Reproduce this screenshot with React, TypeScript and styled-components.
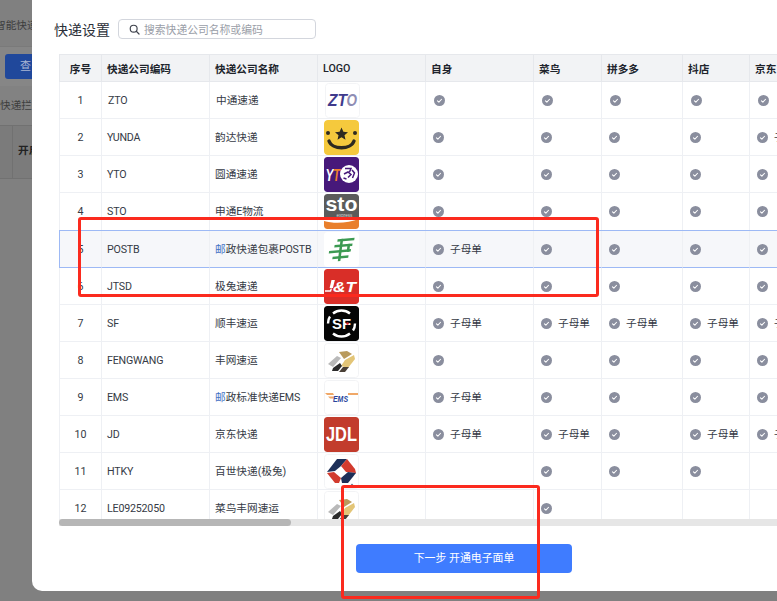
import React, { FC } from 'react';
import styled, { createGlobalStyle } from 'styled-components';

const GlobalStyle = createGlobalStyle`
	html, body {
		margin: 0;
		padding: 0;
		background: #808080;
	}
	body {
		font-family: Roboto, "Noto Sans CJK SC", sans-serif;
		font-size: 10.67px;
		color: #353a45;
	}
`;

const Page = styled.div`
	position: relative;
	display: flex;
	width: 777px;
	height: 601px;
	overflow: hidden;
	background: #808080;
`;

/* page behind the mask, only a 32px strip of it shows */
const Backdrop = styled.div`
	flex: 0 0 32px;
	display: flex;
	flex-direction: column;
	overflow: hidden;
	white-space: nowrap;
	color: #3d3d3d;
	font-size: 10.67px;
`;

const BackTitle = styled.div`
	height: 46px;
	line-height: 51px;
	margin-left: -5px;
	border-bottom: 1px solid #7a7a7a;
`;

const BackToolbar = styled.div`
	height: 39px;
	padding: 7px 0 0 5px;
	box-sizing: border-box;
	background: #868686;
`;

const BackButton = styled.div`
	width: 60px;
	height: 25px;
	line-height: 25px;
	padding-left: 15px;
	border-radius: 3px;
	background: #20489b;
	color: #a9b6d4;
	font-size: 11px;
`;

const BackTab = styled.div`
	height: 39px;
	line-height: 40px;
	background: #828282;
`;

const BackHead = styled.div`
	height: 52px;
	display: flex;
	background: #7b7b7b;
	border-top: 1px solid #717171;
	border-bottom: 1px solid #717171;
`;

const BackHeadCell = styled.div`
	flex: 0 0 12px;
	border-right: 1px solid #717171;
`;

const BackHeadText = styled.div`
	padding-left: 5px;
	line-height: 50px;
	font-weight: 700;
	color: #222;
`;

const Modal = styled.div`
	flex: 0 0 800px;
	height: 591px;
	background: #fff;
	border-bottom-left-radius: 10px;
`;

const ModalHead = styled.div`
	display: flex;
	align-items: center;
	gap: 8px;
	height: 54px;
	padding: 4px 0 0 22px;
	box-sizing: border-box;
`;

const ModalTitle = styled.div`
	font-size: 14px;
	color: #2b2f38;
`;

const SearchBox = styled.div`
	display: flex;
	align-items: center;
	gap: 4px;
	width: 198px;
	height: 20px;
	padding-left: 10px;
	box-sizing: border-box;
	border: 1px solid #d3d6dd;
	border-radius: 4px;
	color: #9a9ea8;
	font-size: 10.8px;
`;

const TableBox = styled.div`
	margin-left: 27px;
	height: 465px;
	overflow: hidden;
`;

const Table = styled.table`
	table-layout: fixed;
	width: 801px;
	border-collapse: separate;
	border-spacing: 0;
`;

const Th = styled.th<{ $center?: boolean; $light?: boolean }>`
	height: 26px;
	padding: 0 0 0 5px;
	box-sizing: content-box;
	text-align: ${(p) => (p.$center ? 'center' : 'left')};
	font-weight: ${(p) => (p.$light ? 500 : 700)};
	color: #20242c;
	background: #f2f3f5;
	border-top: 1px solid #e6e8ec;
	border-right: 1px solid #e6e8ec;
	border-bottom: 1px solid #e6e8ec;
	${(p) => p.$center && 'padding: 0; border-left: 1px solid #e6e8ec;'}
`;

const Td = styled.td<{ $center?: boolean; $nudge?: boolean; $hover?: boolean; $tall?: boolean; $pad?: number }>`
	height: ${(p) => (p.$tall ? 37 : 36)}px;
	padding: 0 0 0 ${(p) => (p.$pad ?? 5) + (p.$nudge ? 1 : 0)}px;
	box-sizing: content-box;
	overflow: hidden;
	white-space: nowrap;
	text-align: ${(p) => (p.$center ? 'center' : 'left')};
	border-right: 1px solid #eef0f4;
	border-bottom: 1px solid ${(p) => (p.$hover ? '#9db9f5' : '#eef0f4')};
	background: ${(p) => (p.$hover ? '#f6f7fa' : '#fff')};
	${(p) => p.$center && `padding: 0; border-left: 1px solid ${p.$hover ? '#9db9f5' : '#eef0f4'};`}
	${(p) => p.$hover && 'box-shadow: 0 -1px 0 #9db9f5;'}
`;

const CompanyName = styled.div`
	margin-top: -2px;
`;

const Accent = styled.span`
	color: #3f6fc4;
`;

const Latin = styled.span`
	letter-spacing: -0.2px;
`;

const Support = styled.div`
	display: flex;
	align-items: center;
	gap: 6px;
`;

const SupportText = styled.span`
	margin-top: -2px;
`;

const LogoBox = styled.div`
	display: block;
	width: 35px;
	height: 35px;
	border-radius: 3px;
	overflow: hidden;

	svg {
		display: block;
	}
`;

const ScrollTrack = styled.div`
	margin-left: 27px;
	height: 7px;
	background: #e6e6e6;
`;

const ScrollThumb = styled.div`
	width: 232px;
	height: 7px;
	border-radius: 4px;
	background: #b6b6b6;
`;

const ModalFoot = styled.div`
	padding: 18px 0 0 324px;
`;

const NextButton = styled.div`
	width: 216px;
	height: 29px;
	line-height: 29px;
	text-align: center;
	border-radius: 4px;
	background: #3f7cff;
	color: #fff;
	font-size: 10.9px;
`;

/* hand-drawn marks sitting on top of the screenshot */
const Mark = styled.div<{ $left: number; $top: number; $w: number; $h: number }>`
	position: absolute;
	left: ${(p) => p.$left}px;
	top: ${(p) => p.$top}px;
	width: ${(p) => p.$w}px;
	height: ${(p) => p.$h}px;
	box-sizing: border-box;
	border: 3px solid #fb2a1e;
	border-radius: 3px;
`;

const CheckIcon: FC = () => (
	<svg width='11' height='11' viewBox='0 0 16 16' style={{ flex: 'none', display: 'block' }}>
		<circle cx='8' cy='8' r='8' fill='#8a8e9e' />
		<path d='M5 8.4l2.1 2L11 6.2' fill='none' stroke='#fff' strokeWidth='1.5' strokeLinecap='round' strokeLinejoin='round' />
	</svg>
);

const SearchIcon: FC = () => (
	<svg width='11' height='11' viewBox='0 0 16 16' fill='none' stroke='#3f434d' strokeWidth='1.7' strokeLinecap='round'>
		<circle cx='6.8' cy='6.8' r='5' />
		<path d='M10.6 10.6L14.6 14.6' />
	</svg>
);

const logoFont = 'Liberation Sans, Arial, sans-serif';

const Svg: FC<{ children: React.ReactNode }> = ({ children }) => (
	<svg width='35' height='35' viewBox='0 0 35 35'>{children}</svg>
);

const FengMark: FC = () => (
	<Svg>
		<rect x='0.5' y='0.5' width='34' height='34' rx='3' fill='#fff' stroke='#f2f3f5' />
		<path d='M15 9l8-1 5 3-8 5z' fill='#b99a5c' />
		<path d='M21 17l9-5 1 4-7 9-7-2z' fill='#e3c577' />
		<path d='M4 21l9-8 4 2-8 9z' fill='#b9b9b9' />
		<path d='M9 25l7-5 2 3-4 5H8z' fill='#2b2b2b' />
		<path d='M15 29l4-5h6l-4 5z' fill='#4a4036' />
	</Svg>
);

const logos: Record<string, React.ReactNode> = {
	ZTO: (
		<Svg>
			<rect x='0.5' y='0.5' width='34' height='34' rx='3' fill='#fff' stroke='#f3f4f6' />
			<text x='3' y='23' fontFamily={logoFont} fontSize='16' fontWeight='700' fontStyle='italic' fill='#3f3a8c' textLength='19' lengthAdjust='spacingAndGlyphs'>ZT</text>
			<text x='21.5' y='23' fontFamily={logoFont} fontSize='16' fontWeight='700' fontStyle='italic' fill='#8f8db4' textLength='10.5' lengthAdjust='spacingAndGlyphs'>O</text>
		</Svg>
	),
	YUNDA: (
		<Svg>
			<rect width='35' height='35' rx='4' fill='#f5c93d' />
			<circle cx='4' cy='13' r='2' fill='#2e2a20' />
			<circle cx='31' cy='13' r='2' fill='#2e2a20' />
			<path d='M17.5 7.5l1.9 4.3 4.6.4-3.5 3 1 4.5-4-2.4-4 2.4 1-4.5-3.5-3 4.6-.4z' fill='#2e2a20' />
			<path d='M5 21c3 9 22 9 25 0' fill='none' stroke='#2e2a20' strokeWidth='3.4' strokeLinecap='round' />
		</Svg>
	),
	YTO: (
		<Svg>
			<rect width='35' height='35' rx='3' fill='#47197a' />
			<text x='1.5' y='23.5' fontFamily={logoFont} fontSize='17' fontWeight='700' fontStyle='italic' fill='#fff' textLength='8' lengthAdjust='spacingAndGlyphs'>Y</text>
			<text x='9' y='23.5' fontFamily={logoFont} fontSize='17' fontWeight='700' fontStyle='italic' fill='#ef7f2d' textLength='7' lengthAdjust='spacingAndGlyphs'>T</text>
			<circle cx='25' cy='17' r='9' fill='#fff' />
			<path d='M21 11.5h6l-1.5 3.5M20 17l4-2 3 2.5-3 3M28 13l2.5 3-2 5M19.5 21l3 1' fill='none' stroke='#47197a' strokeWidth='1.5' />
		</Svg>
	),
	STO: (
		<Svg>
			<rect width='35' height='35' rx='3' fill='#fff' />
			<path d='M3 0h29a3 3 0 0 1 3 3v21H0V3a3 3 0 0 1 3-3z' fill='#5b5b5b' />
			<path d='M0 27c10 3 25 2 35-2v7a3 3 0 0 1-3 3H3a3 3 0 0 1-3-3z' fill='#e97f2c' />
			<text x='1.5' y='17' fontFamily={logoFont} fontSize='21' fontWeight='700' fill='#fff' textLength='32' lengthAdjust='spacingAndGlyphs'>sto</text>
			<text x='12.5' y='23' fontFamily={logoFont} fontSize='4.5' fill='#d5d5d5'>express</text>
		</Svg>
	),
	POSTB: (
		<Svg>
			<rect width='35' height='35' rx='3' fill='#fff' />
			<g fill='#3c9a52' transform='rotate(-5 17 17)'>
				<path d='M14.5 7h17l-.6 2.4H14z' />
				<path d='M11 12.5h18l-.6 2.4H10.4z' />
				<path d='M5 18h22l-.6 2.4H4.4z' />
				<path d='M8 24h16l-.6 2.4H7.4z' />
				<path d='M17.5 7h2.6l-4.8 22h-2.6z' />
				<path d='M24 12.5h2.6l-1.6 8h-2.6z' />
			</g>
		</Svg>
	),
	JTSD: (
		<Svg>
			<rect width='35' height='35' rx='3' fill='#d92e28' />
			<path d='M1 21.2h5l.6-1.6h1.4l-.9 3.2H1z' fill='#fff' />
			<text x='9' y='23' fontFamily={logoFont} fontSize='15' fontWeight='700' fontStyle='italic' fill='#fff' textLength='23' lengthAdjust='spacingAndGlyphs'>&amp;T</text>
			<path d='M7.5 11h3.4l-2 8H5.6z' fill='#fff' />
		</Svg>
	),
	SF: (
		<Svg>
			<rect width='35' height='35' rx='3' fill='#050505' />
			<path d='M9 7.5A13.5 13.5 0 0 1 26 7.5M26 27.5A13.5 13.5 0 0 1 9 27.5M4 17.5c0-3 .6-5 2-7M31 17.5c0 3-.6 5-2 7' fill='none' stroke='#fff' strokeWidth='2.4' />
			<text x='8' y='23' fontFamily={logoFont} fontSize='15.5' fontWeight='700' fill='#fff' textLength='19' lengthAdjust='spacingAndGlyphs'>SF</text>
			<circle cx='23.5' cy='17.5' r='1.3' fill='#e02020' />
		</Svg>
	),
	FENGWANG: <FengMark />,
	EMS: (
		<Svg>
			<rect x='0.5' y='0.5' width='34' height='34' rx='3' fill='#fff' stroke='#f2f3f5' />
			<path d='M1 13h8l1 2H3zM24 13h10v2H24z' fill='#f0a868' />
			<path d='M4 16.5h6l.5 2H6z' fill='#f0a868' />
			<text x='9' y='22' fontFamily={logoFont} fontSize='8.5' fontWeight='700' fontStyle='italic' fill='#27439b' textLength='15' lengthAdjust='spacingAndGlyphs'>EMS</text>
		</Svg>
	),
	JD: (
		<Svg>
			<rect width='35' height='35' rx='3' fill='#c23c2c' />
			<text x='2' y='24' fontFamily={logoFont} fontSize='21' fontWeight='700' fill='#fff' textLength='31' lengthAdjust='spacingAndGlyphs'>JDL</text>
		</Svg>
	),
	HTKY: (
		<Svg>
			<rect x='0.5' y='0.5' width='34' height='34' rx='3' fill='#fff' stroke='#f3f4f6' />
			<path d='M13 5h10l-6 7-6 5-8 1z' fill='#1d2f58' />
			<path d='M23 5l8 10 1 4-10-1-5-6z' fill='#d23b2e' />
			<path d='M3 19l7-1 7 6-2 5h-4z' fill='#d23b2e' />
			<path d='M32 19l-8 10h-6l-1-5 7-6z' fill='#1d2f58' />
			<circle cx='28' cy='31' r='1.2' fill='#7a8294' />
		</Svg>
	),
	LE09252050: <FengMark />
};

type SupportFlag = 0 | 1 | 2;

interface ICompany {
	code: string;
	name: React.ReactNode;
	flags: SupportFlag[];
}

const companies: ICompany[] = [
	{ code: 'ZTO', flags: [1, 1, 1, 1, 1], name: '中通速递' },
	{ code: 'YUNDA', flags: [1, 1, 1, 1, 2], name: '韵达快递' },
	{ code: 'YTO', flags: [1, 1, 1, 1, 1], name: '圆通速递' },
	{ code: 'STO', flags: [1, 1, 1, 1, 1], name: <>申通<Latin>E</Latin>物流</> },
	{ code: 'POSTB', flags: [2, 1, 1, 1, 1], name: <><Accent>邮</Accent>政快递包裹<Latin>POSTB</Latin></> },
	{ code: 'JTSD', flags: [1, 1, 1, 1, 1], name: '极兔速递' },
	{ code: 'SF', flags: [2, 2, 2, 2, 2], name: '顺丰速运' },
	{ code: 'FENGWANG', flags: [1, 1, 1, 1, 1], name: '丰网速运' },
	{ code: 'EMS', flags: [2, 1, 1, 1, 1], name: <><Accent>邮</Accent>政标准快递<Latin>EMS</Latin></> },
	{ code: 'JD', flags: [2, 2, 1, 2, 2], name: '京东快递' },
	{ code: 'HTKY', flags: [0, 1, 1, 1, 0], name: '百世快递(极兔)' },
	{ code: 'LE09252050', flags: [0, 1, 0, 0, 0], name: '菜鸟丰网速运' }
];

const columnWidths = [43, 108, 108, 108, 108, 68, 81, 67, 110];
const channels = ['自身', '菜鸟', '拼多多', '抖店', '京东'];

const App: FC = () => {
	return (
		<Page>
			<GlobalStyle />
			<Backdrop>
				<BackTitle>智能快递</BackTitle>
				<BackToolbar><BackButton>查</BackButton></BackToolbar>
				<BackTab>快递拦</BackTab>
				<BackHead>
					<BackHeadCell />
					<BackHeadText>开启</BackHeadText>
				</BackHead>
			</Backdrop>
			<Modal>
				<ModalHead>
					<ModalTitle>快递设置</ModalTitle>
					<SearchBox>
						<SearchIcon />
						<span>搜索快递公司名称或编码</span>
					</SearchBox>
				</ModalHead>
				<TableBox>
					<Table>
						<colgroup>
							{columnWidths.map((width, index) => <col key={index} width={width} />)}
						</colgroup>
						<thead>
							<tr>
								<Th $center>序号</Th>
								<Th>快递公司编码</Th>
								<Th>快递公司名称</Th>
								<Th $light>LOGO</Th>
								{channels.map((channel) => <Th key={channel}>{channel}</Th>)}
							</tr>
						</thead>
						<tbody>
							{companies.map((company, index) => {
								const hover = index === 4;
								const nudge = index === 0;
								const tall = index === 3;
								return (
									<tr key={company.code}>
										<Td $center $hover={hover} $tall={tall}>{index + 1}</Td>
										<Td $hover={hover} $nudge={nudge}><Latin>{company.code}</Latin></Td>
										<Td $hover={hover} $nudge={nudge}><CompanyName>{company.name}</CompanyName></Td>
										<Td $hover={hover} $nudge={nudge} $pad={6}>
											<LogoBox>{logos[company.code]}</LogoBox>
										</Td>
										{company.flags.map((flag, flagIndex) => (
											<Td key={flagIndex} $hover={hover} $nudge={nudge} $pad={7}>
												{flag > 0 && (
													<Support>
														<CheckIcon />
														{flag === 2 && <SupportText>子母单</SupportText>}
													</Support>
												)}
											</Td>
										))}
									</tr>
								);
							})}
						</tbody>
					</Table>
				</TableBox>
				<ScrollTrack><ScrollThumb /></ScrollTrack>
				<ModalFoot>
					<NextButton>下一步 开通电子面单</NextButton>
				</ModalFoot>
			</Modal>
			<Mark $left={78} $top={217} $w={521} $h={80} />
			<Mark $left={341} $top={485} $w={199} $h={114} />
		</Page>
	);
};

export default App;
